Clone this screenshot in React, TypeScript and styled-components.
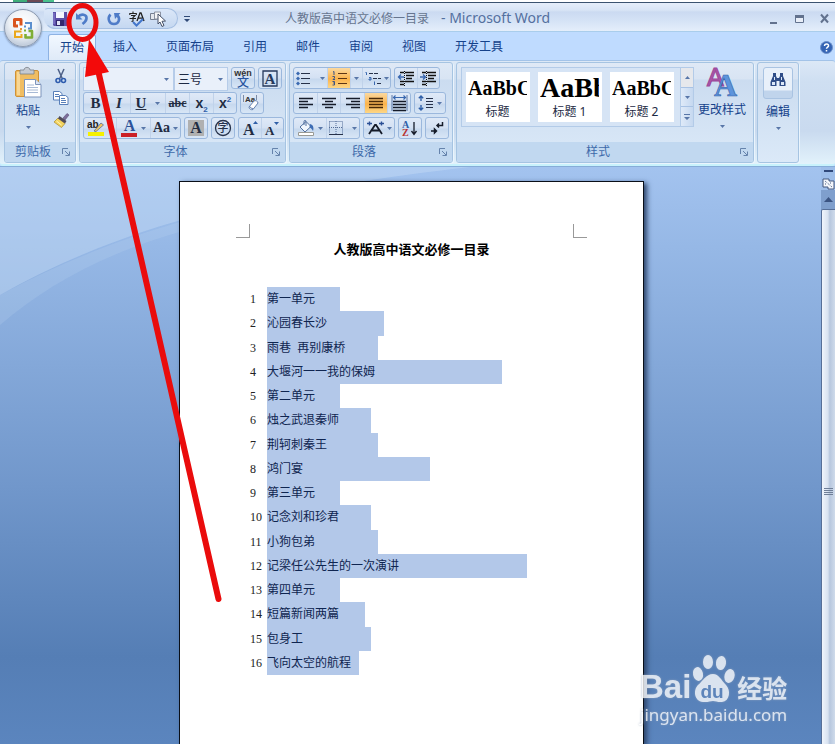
import React from "react";
import styled, { createGlobalStyle, css } from "styled-components";

const Global = createGlobalStyle`
  * { box-sizing: border-box; }
  body { margin: 0; font-family: "Noto Sans", "Noto Sans CJK SC", sans-serif; font-size: 12px; color: #15428b; }
  button, select { font: inherit; color: inherit; }
  button { border: 0; background: none; padding: 0; margin: 0; display: flex; align-items: center; justify-content: center; }
  svg { display: block; flex: none; overflow: visible; }
`;

const Window = styled.div`
  position: relative;
  display: flex;
  flex-direction: column;
  min-height: 100vh;
  overflow: hidden;
  background: #bfdbff;
`;

/* ---------- title bar ---------- */
const TopEdge = styled.div`
  height: 3px;
  padding-left: 13px;
  background: #fff;
  border-bottom: 1px solid #3c5470;
`;
const TopSliver = styled.div`
  width: 41px;
  height: 2px;
  background: linear-gradient(90deg, #3fae7a 0 14px, #6d4a55 14px 30px, #49c08c 30px);
`;
const TitleBar = styled.header`
  display: flex;
  align-items: center;
  height: 29px;
  padding: 3px 4px 0 44px;
  border-bottom: 1px solid #a9cdec;
  background: linear-gradient(#e6eefa 0, #d9e5f6 7px, #cbdaf1 9px, #d5e3f6 18px, #e4eefb 100%);
`;
const QuickBar = styled.div`
  display: flex;
  align-items: center;
  width: 134px;
  height: 21px;
  padding-left: 7px;
  border: 1px solid #a5bfe2;
  border-left-color: transparent;
  border-radius: 4px 11px 11px 12px;
  background: linear-gradient(#dbe7f8, #c5d8f1);
`;
const QuickButton = styled.button<{ $w: number }>`
  width: ${(p) => p.$w}px;
  height: 18px;
`;
const MoreButton = styled.button`
  width: 18px;
  height: 18px;
`;
const TitleText = styled.h1`
  flex: 1;
  margin: 0 0 0 89px;
  font-size: 12px;
  line-height: 20px;
  font-weight: 400;
  color: #66758f;
  white-space: nowrap;
`;
const AppName = styled.span`
  margin-left: 12px;
  font-size: 14px;
  color: #54709f;
`;
const WindowButtons = styled.div`
  display: flex;
  gap: 11px;
  & > button { width: 14px; height: 18px; }
`;

const OfficeButton = styled.button`
  position: absolute;
  left: 4px;
  top: 9px;
  width: 38px;
  height: 38px;
  border-radius: 50%;
  border: 1px solid #8d9bb0;
  background: radial-gradient(circle at 50% 35%, #ffffff 0, #eef2f7 45%, #c3cedd 75%, #f4f7fb 100%);
  box-shadow: 0 1px 2px #7d91b0;
`;

/* ---------- tabs ---------- */
const TabRow = styled.nav`
  display: flex;
  align-items: flex-end;
  gap: 5px;
  height: 28px;
  padding: 0 2px 0 48px;
  background: #bfdbff;
`;
const Tab = styled.button<{ $active?: boolean }>`
  height: 26px;
  padding: 0 12px;
  line-height: 20px;
  ${(p) =>
    p.$active &&
    css`
      padding: 0 11px;
      border: 1px solid #8db2e3;
      border-bottom: 0;
      border-radius: 3px 3px 0 0;
      background: linear-gradient(#f2f8ff, #dfeaf8);
    `}
`;
const HelpButton = styled.button`
  margin-left: auto;
  width: 14px;
  height: 26px;
`;

/* ---------- ribbon ---------- */
const Ribbon = styled.section`
  display: flex;
  gap: 3px;
  padding: 1px 4px;
  border-top: 1px solid #a3c3e8;
  border-bottom: 2px solid #c8f2fc;
  border-radius: 3px;
  background: linear-gradient(#dce8f6 0, #cfdff2 20px, #c9daef 70px, #e2f2fb 100%);
`;
const GroupBox = styled.div<{ $w: number }>`
  display: flex;
  flex-direction: column;
  width: ${(p) => p.$w}px;
  height: 101px;
  border: 1px solid #a6c4e2;
  border-radius: 3px;
  background: linear-gradient(#dfe9f6 0, #d8e4f3 16px, #cbdcf0 17px, #dbe9f8 100%);
  box-shadow: 1px 1px 0 #eaf4fd;
  overflow: hidden;
`;
const GroupBody = styled.div`
  flex: 1;
  padding: 4px 3px 0;
`;
const GroupLabel = styled.div`
  display: flex;
  align-items: center;
  height: 20px;
  padding-right: 4px;
  background: #c1d8f0;
  color: #3e6aaa;
  & > span { flex: 1; text-align: center; line-height: 18px; }
`;
const Launcher = styled.button`
  width: 10px;
  height: 12px;
`;
const Row = styled.div`
  display: flex;
  gap: 3px;
  height: 22px;
  margin-bottom: 3px;
`;
const Cluster = styled.div`
  display: flex;
  border: 1px solid #9bb8dd;
  border-radius: 3px;
  background: linear-gradient(#dfe9f7 0, #d4e1f3 10px, #c6d8ee 11px, #d8e6f6 100%);
`;
const Tool = styled.button<{ $w: number; $on?: boolean }>`
  width: ${(p) => p.$w}px;
  height: 20px;
  gap: 3px;
  color: #222c42;
  & + & { border-left: 1px solid #c0d2ea; }
  ${(p) =>
    p.$on &&
    css`
      background: linear-gradient(#fbd9a0, #fbb34c 55%, #fdd787);
    `}
`;
const Glyph = styled.span<{ $size?: number; $italic?: boolean; $line?: string; $boxed?: boolean; $sans?: boolean }>`
  font-family: ${(p) => (p.$sans ? '"Liberation Sans"' : '"Liberation Serif"')}, "Noto Sans CJK SC", serif;
  font-weight: 700;
  font-size: ${(p) => p.$size ?? 15}px;
  line-height: 16px;
  font-style: ${(p) => (p.$italic ? "italic" : "normal")};
  text-decoration: ${(p) => p.$line ?? "none"};
  & sub, & sup { font-size: 8px; line-height: 0; color: #2f5fa8; }
  ${(p) => p.$boxed && css`padding: 0 2px; background: #b0b0b0;`}
`;
const Field = styled.div<{ $w: number }>`
  display: flex;
  align-items: center;
  width: ${(p) => p.$w}px;
  height: 24px;
  padding-right: 4px;
  border: 1px solid #b6cce9;
  background: #e9f0fa;
  & + & { margin-left: -3px; }
  & select {
    flex: 1;
    min-width: 0;
    appearance: none;
    border: 0;
    padding: 0 3px;
    background: transparent;
    font-size: 12px;
    color: #1d2a44;
  }
`;

const ClipBody = styled.div`
  display: flex;
  justify-content: space-between;
  padding: 0 2px 0 6px;
`;
const ClipSide = styled.div`
  display: flex;
  flex-direction: column;
  gap: 4px;
  & > button { width: 18px; height: 18px; }
`;
const BigButton = styled.button<{ $w: number }>`
  flex-direction: column;
  justify-content: flex-start;
  width: ${(p) => p.$w}px;
  height: 66px;
  & > span { line-height: 18px; margin: 4px 0 6px; white-space: nowrap; }
`;
const FindPlate = styled.i`
  display: flex;
  justify-content: center;
  width: 30px;
  height: 32px;
  padding-top: 4px;
  border: 1px solid #a9c3e2;
  border-radius: 3px;
  background: linear-gradient(#e8f0fa 0 22px, #c0d4ec 23px);
`;

const StylesBody = styled.div`
  display: flex;
  justify-content: space-between;
  padding-left: 1px;
`;
const Gallery = styled.div`
  display: flex;
  height: 60px;
  border: 1px solid #b3cbe8;
  background: #d6e4f5;
`;
const Cards = styled.div`
  display: flex;
  gap: 8px;
  padding: 4px 6px 4px 4px;
`;
const Card = styled.button`
  flex-direction: column;
  justify-content: space-between;
  width: 64px;
  height: 50px;
  padding: 2px 3px 1px 2px;
  overflow: hidden;
  background: #fff;
  color: #1d2a44;
  & > span { line-height: 18px; }
`;
const Sample = styled.b<{ $size: number }>`
  width: 100%;
  overflow: hidden;
  text-align: left;
  font-family: "Liberation Serif", serif;
  font-size: ${(p) => p.$size}px;
  line-height: 28px;
  color: #000;
`;
const GalleryScroll = styled.div`
  display: flex;
  flex-direction: column;
  width: 13px;
  border-left: 1px solid #b3cbe8;
  & > button { flex: 1; background: linear-gradient(90deg, #dfeaf8, #c5d8f0); }
  & > button + button { border-top: 1px solid #a8c2e4; }
  & > button:first-child { background: #e6e8ec; }
`;

/* ---------- document ---------- */
const Workspace = styled.main`
  position: relative;
  flex: 1;
  display: flex;
  border-top: 1px solid #86add8;
  background: linear-gradient(#a3c3ef 0, #96b8e6 80px, #7197cb 320px, #557eb5 490px, #5b85be 100%);
`;
const Swoosh = styled.svg`
  position: absolute;
  left: 0;
  top: 0;
`;
const Canvas = styled.div`
  position: relative;
  flex: 1;
  display: flex;
  justify-content: center;
  padding: 14px 0 0 2px;
`;
const Paper = styled.article`
  flex: 0 1 465px;
  padding: 42px 56px 60px;
  border: 1px solid #0a0f18;
  border-bottom: 0;
  background: #fff;
  box-shadow: 3px 2px 5px #2d456b;
`;
const CropRow = styled.div`
  display: flex;
  justify-content: space-between;
  height: 14px;
`;
const Crop = styled.i<{ $side: "left" | "right" }>`
  width: 14px;
  border-bottom: 1px solid #999;
  ${(p) => (p.$side === "left" ? "border-right" : "border-left")}: 1px solid #999;
`;
const DocTitle = styled.h2`
  margin: 1px 0 0;
  text-align: center;
  font-size: 13px;
  line-height: 20px;
  color: #000;
`;
const Lines = styled.ol`
  display: grid;
  grid-auto-rows: 1fr;
  min-height: 388px;
  margin: 28px 0 0;
  padding: 0 0 0 14px;
  list-style: none;
`;
const Line = styled.li`
  display: flex;
  align-items: stretch;
`;
const Num = styled.span`
  width: 17px;
  font-family: "Liberation Serif", serif;
  line-height: 24px;
  color: #222;
`;
const Marked = styled.span<{ $w: number }>`
  width: ${(p) => p.$w}px;
  background: #b3c8e9;
  line-height: 24px;
  white-space: pre;
  color: #0f2550;
`;

const ScrollColumn = styled.aside`
  position: relative;
  display: flex;
  flex-direction: column;
  width: 14px;
  padding-top: 3px;
  background: #9dbde9;
`;
const SplitBox = styled.button`
  width: 9px;
  height: 2px;
  margin: 0 0 5px 3px;
  background: #30487a;
`;
const RulerButton = styled.button`
  width: 14px;
  height: 13px;
`;
const ScrollUp = styled.button`
  width: 14px;
  height: 19px;
  background: #7f9fcd;
`;
const Thumb = styled.div`
  flex: 1;
  display: flex;
  align-items: center;
  justify-content: center;
  padding-top: 30px;
  border: 1px solid #566f98;
  border-bottom: 0;
  border-right: 0;
  border-radius: 2px 0 0 0;
  background: linear-gradient(90deg, #f0f5fc, #d8e2f0 45%, #b7c7de 60%, #cfdbeb);
`;

/* ---------- overlays ---------- */
const Annotation = styled.svg`
  position: absolute;
  left: 0;
  top: 0;
  pointer-events: none;
`;
const Watermark = styled.div`
  position: absolute;
  right: 45px;
  bottom: 17px;
  width: 150px;
  color: #fff;
  opacity: 0.78;
  filter: drop-shadow(0 0 1px #8fa2bd);
  font-family: "Noto Sans", sans-serif;
  font-size: 17px;
  line-height: 24px;
  white-space: nowrap;
`;
const Brand = styled.div`
  display: flex;
  align-items: flex-end;
  height: 49px;
  font-family: "Liberation Sans", sans-serif;
  font-weight: 700;
  font-size: 33px;
  line-height: 32px;
`;
const BrandCn = styled.span`
  margin-left: 2px;
  font-family: "Noto Sans CJK SC", sans-serif;
  font-size: 25px;
`;

/* ---------- icons ---------- */
const Caret = ({ up }: { up?: boolean }) => (
  <svg width="5" height="3" viewBox="0 0 5 3">
    <path d={up ? "M0 3h5L2.500 0z" : "M0 0h5L2.500 3z"} fill="#5876a8" />
  </svg>
);
const LauncherIcon = () => (
  <svg width="8" height="8" viewBox="0 0 8 8" fill="none" stroke="#6583ac">
    <path d="M.5 6V.5H6M3 3l4 4M7.500 3.500v4h-4" />
  </svg>
);
const SaveIcon = () => (
  <svg width="14" height="14" viewBox="0 0 14 14">
    <path d="M0 0h14v14H1L0 13z" fill="#5b4fa8" />
    <path d="M3 0h8v6H3z" fill="#f4f6ff" />
    <path d="M3 8h8v6H3z" fill="#32286e" />
    <path d="M4 9h3v4H4z" fill="#dfe3f5" />
    <path d="M1 1v11" stroke="#8f88d4" />
  </svg>
);
const UndoIcon = () => (
  <svg width="16" height="15" viewBox="0 0 16 15">
    <path d="M4 6C7 2 13 3.500 12.500 7.500 12.200 10 10.500 11.500 8.500 13" fill="none" stroke="#4f7cc8" strokeWidth="2.600" />
    <path d="M2 2v6.500h6.500z" fill="#4f7cc8" />
  </svg>
);
const RedoIcon = () => (
  <svg width="14" height="14" viewBox="0 0 14 14">
    <path d="M3.500 2.500C0 6 2 12 7 12c5 0 6.500-5.500 3.500-8.500" fill="none" stroke="#4f7cc8" strokeWidth="2.600" />
    <path d="M7 1h6.500L8 7z" fill="#4f7cc8" />
  </svg>
);
const SpellIcon = () => (
  <svg width="17" height="16" viewBox="0 0 17 16" fill="none">
    <path d="M4 .5v1.500M.8 4V2.500h6.500V4M2 4.500h4L4 6.500V10l-1.500.5M.5 7.500H7" stroke="#222" strokeWidth="1.100" />
    <path d="M8 10l3-8h1l3 8M9.200 7.200h4.800" stroke="#222" strokeWidth="1.300" />
    <path d="M4 11l3.500 3.500L14 8" stroke="#4477cc" strokeWidth="2" />
  </svg>
);
const SelectIcon = () => (
  <svg width="17" height="16" viewBox="0 0 17 16">
    <path d="M.5 2.500h6v6h-6z" fill="#e5e8ee" stroke="#767f90" />
    <path d="M4.500 1h6v7h-6z" fill="#f4f4f6" stroke="#8c93a2" />
    <path d="M8 3l7.500 7-3.500.3 2 4.200-2 1-2-4.500L8 13z" fill="#fff" stroke="#444f66" />
  </svg>
);
const OfficeLogo = () => (
  <svg width="22" height="22" viewBox="0 0 22 22" fill="none">
    <path d="M9 8.500V2.500H2.500V9H6" stroke="#d9541e" strokeWidth="3" strokeLinejoin="round" />
    <path d="M13 6h6v5.500h-3" stroke="#5b8fce" strokeWidth="2" />
    <path d="M9.500 14.500H3V20h6.500v-3" stroke="#eaa81c" strokeWidth="2" />
    <path d="M13.500 17v3.500H20V14h-3.500" stroke="#7fae35" strokeWidth="2.600" strokeLinejoin="round" />
    <path d="M12 8.500h2v2h-2z" fill="#5b8fce" />
    <path d="M8 11h2v2H8z" fill="#e9963a" />
    <path d="M12 12.500h2v2h-2z" fill="#7fae35" />
  </svg>
);
const HelpIcon = () => (
  <svg width="13" height="13" viewBox="0 0 13 13">
    <circle cx="6.500" cy="6.500" r="6" fill="#3564b4" stroke="#6d8fc8" />
    <path d="M4.500 5c0-3 4.500-2.500 4 0-.2 1-2 1.400-2 2.800M6.500 9v1.500" fill="none" stroke="#fff" strokeWidth="1.500" />
  </svg>
);
const PasteIcon = () => (
  <svg width="27" height="31" viewBox="0 0 27 31">
    <rect x=".5" y="3.500" width="23" height="26" rx="1.500" fill="#f0bd62" stroke="#cf9136" />
    <path d="M2 5h3v23H2z" fill="#f8d693" />
    <path d="M5 3h4c0-3.500 6-3.500 6 0h4v4H5z" fill="#c5cad2" stroke="#7a8088" strokeWidth=".8" />
    <path d="M9.500 12.500h11l5.500 5V30h-16.500z" fill="#fff" stroke="#7d94bb" />
    <path d="M20.500 12.500v5H26" fill="#dbe5f3" stroke="#7d94bb" />
    <path d="M12 18h7M12 20.500h11M12 23h11M12 25.500h11" stroke="#a8bad5" />
  </svg>
);
const CutIcon = () => (
  <svg width="12" height="15" viewBox="0 0 12 15" fill="none">
    <path d="M3 0l4.500 10M9 0L4.500 10" stroke="#4d6087" strokeWidth="1.500" />
    <circle cx="3" cy="11.500" r="2" stroke="#2e5cae" strokeWidth="1.600" />
    <circle cx="8.500" cy="11.500" r="2" stroke="#2e5cae" strokeWidth="1.600" />
  </svg>
);
const CopyIcon = () => (
  <svg width="16" height="14" viewBox="0 0 16 14" stroke="#587fb9">
    <path d="M.5.5h6l2.500 2V9H.5z" fill="#fff" />
    <path d="M2 3.500h4M2 5.500h4" />
    <path d="M6.500 4.500h6l2.500 2v7H6.500z" fill="#fff" />
    <path d="M8 7.500h4M8 9.500h5M8 11.500h5" />
  </svg>
);
const BrushIcon = () => (
  <svg width="17" height="15" viewBox="0 0 17 15">
    <path d="M10 5l4-4.500 2 1.500-4 5z" fill="#7c6d9b" stroke="#574c72" strokeWidth=".6" />
    <path d="M5 5l7 5.500-3.500 4L1 9z" fill="#f3d35e" stroke="#a88a2d" strokeWidth=".7" />
    <path d="M6.500 3l7 5-1.500 2.500-7-5z" fill="#504b5b" />
    <path d="M3.500 8l5 4" stroke="#fff4b8" />
  </svg>
);
const PinyinIcon = () => (
  <svg width="20" height="19" viewBox="0 0 20 19">
    <text x="10" y="7" textAnchor="middle" fontFamily="Liberation Sans" fontWeight="700" fontSize="9" fill="#333">wén</text>
    <text x="10" y="18" textAnchor="middle" fontFamily="Noto Sans CJK SC" fontSize="12" fontWeight="500" fill="#2855a0">文</text>
  </svg>
);
const FramedA = () => (
  <svg width="16" height="17" viewBox="0 0 16 17">
    <path d="M1 1h14v15H1z" fill="none" stroke="#26395c" strokeWidth="1.300" />
    <text x="8" y="13.500" textAnchor="middle" fontFamily="Liberation Serif" fontWeight="700" fontSize="15" fill="#26395c">A</text>
  </svg>
);
const EraserIcon = () => (
  <svg width="18" height="18" viewBox="0 0 18 18">
    <text x="2" y="8" fontFamily="Liberation Sans" fontWeight="700" fontSize="8" fill="#333">Aa</text>
    <path d="M.5 1v7M13.500 1v5" stroke="#7d8ba5" />
    <path d="M6 13l5-6c1-1 4 0 4 2l-5 6.500c-1.500 1-4.500-1-4-2.500z" fill="#fff" stroke="#6480b0" />
    <path d="M6.500 12c.5 2 2 2.500 4 2.500" fill="none" stroke="#6480b0" />
  </svg>
);
const HighlightIcon = () => (
  <svg width="18" height="18" viewBox="0 0 18 18">
    <path d="M1 13h16v4H1z" fill="#f5f000" />
    <text x="0" y="9" fontFamily="Liberation Sans" fontWeight="700" fontSize="10" fill="#222">ab</text>
    <path d="M7 12l7-8 2.500 2L9 12.500z" fill="#f3c760" stroke="#5b6f96" strokeWidth=".8" />
  </svg>
);
const FontColorIcon = () => (
  <svg width="17" height="18" viewBox="0 0 17 18">
    <text x="8.500" y="12" textAnchor="middle" fontFamily="Liberation Serif" fontWeight="700" fontSize="16" fill="#2d539a">A</text>
    <path d="M0 14h16v4H0z" fill="#cb2026" />
  </svg>
);
const CircledChar = () => (
  <svg width="18" height="18" viewBox="0 0 18 18">
    <circle cx="9" cy="9" r="7.500" fill="none" stroke="#26314a" strokeWidth="1.300" />
    <text x="9" y="13" textAnchor="middle" fontFamily="Noto Sans CJK SC" fontWeight="500" fontSize="11" fill="#26314a">字</text>
  </svg>
);
const SizeA = ({ grow }: { grow?: boolean }) => (
  <svg width="17" height="17" viewBox="0 0 17 17">
    <text x="1" y="15" fontFamily="Liberation Serif" fontWeight="700" fontSize={grow ? 16 : 13} fill="#222c42">A</text>
    <path d={grow ? "M11 4h5l-2.500-3z" : "M10 2h5l-2.500 3z"} fill="#2f5fa8" />
  </svg>
);
const BulletsIcon = () => (
  <svg width="15" height="14" viewBox="0 0 15 14">
    <path d="M5 2.500h9M5 7.500h9M5 12.500h9" stroke="#26314a" />
    <path d="M0 2.500l2-2 2 2-2 2zM0 7.500l2-2 2 2-2 2zM0 12.500l2-2 2 2-2 2z" fill="#3a68b0" />
  </svg>
);
const NumbersIcon = () => (
  <svg width="15" height="15" viewBox="0 0 15 15" fill="none">
    <path d="M6 2.500h9M6 7.500h9M6 12.500h9" stroke="#5d3515" />
    <path d="M1 1l1-.5V4M.5 5.500h2v1.500L1 8.500h2M.5 10.500h2v1.500H1.500 2.500v2H.5" stroke="#3c5587" />
  </svg>
);
const MultiIcon = () => (
  <svg width="16" height="15" viewBox="0 0 16 15" fill="none">
    <path d="M4 2.500h10M8 7.500h8M12 12.500h4" stroke="#26314a" strokeDasharray="4 1" />
    <path d="M.5 1.500h1V4M4 6.500h2v2.500H4V8h2M9.500 10.500v3.500" stroke="#3a68b0" />
  </svg>
);
const IndentIcon = ({ right }: { right?: boolean }) => (
  <svg width="17" height="15" viewBox="0 0 17 15" fill="none">
    <path d="M2 1.500h4M7 1.500h9M8 4.500h8M8 7.500h6M2 10.500h4M7 10.500h9M2 13.500h4" stroke="#111" strokeWidth="1.500" />
    <path d="M6.500 0v15" stroke="#111" strokeDasharray="1 1" />
    <path d={right ? "M0 6h5M3 3.500L5.500 6 3 8.500" : "M6 6H1M3 3.500L.5 6 3 8.500"} stroke="#3a68b0" strokeWidth="1.400" />
  </svg>
);
const aligns: Record<string, string> = {
  left: "M1 1.500h14M1 4.500h9M1 7.500h14M1 10.500h9",
  center: "M1 1.500h14M4 4.500h8M1 7.500h14M4 10.500h8",
  right: "M1 1.500h14M6 4.500h9M1 7.500h14M6 10.500h9",
  full: "M1 1.500h14M1 4.500h14M1 7.500h14M1 10.500h14",
};
const AlignIcon = ({ kind }: { kind: string }) => (
  <svg width="16" height="12" viewBox="0 0 16 12">
    <path d={aligns[kind]} stroke={kind === "full" ? "#4a2a08" : "#151b29"} strokeWidth="1.400" />
  </svg>
);
const DistributeIcon = () => (
  <svg width="17" height="17" viewBox="0 0 17 17" fill="none">
    <path d="M1 0v16M16 0v16" stroke="#5a76a5" />
    <path d="M2 2.500h13M4.500.5l-2 2 2 2M12.500.5l2 2-2 2" stroke="#3a68b0" strokeWidth="1.200" />
    <path d="M2 6.500h13M2 9.500h13M2 12.500h13M2 15.500h13" stroke="#151b29" strokeWidth="1.400" />
  </svg>
);
const SpacingIcon = () => (
  <svg width="16" height="16" viewBox="0 0 16 16" fill="none">
    <path d="M3 1v5M3 10v5M.8 3.200L3 1l2.200 2.200M.8 12.800L3 15l2.200-2.200" stroke="#2f5fa8" strokeWidth="1.400" />
    <path d="M8 3.500h7M8 6.500h7M8 9.500h7M8 12.500h7" stroke="#26314a" />
  </svg>
);
const BucketIcon = () => (
  <svg width="17" height="16" viewBox="0 0 17 16">
    <path d="M2 7l6-5.500 5 5-6 5.500z" fill="#f1f6fd" stroke="#516f9e" />
    <path d="M6 5V1.500C6 0 8 0 8 1.500V6" fill="none" stroke="#516f9e" />
    <path d="M12 4c3.500 1 4 4 3 7-1-2-2-3-3.500-3.500z" fill="#3d6cb4" />
    <path d="M.5 12.500h15v3H.5z" fill="#fff" stroke="#9a9a94" />
  </svg>
);
const BorderIcon = () => (
  <svg width="14" height="14" viewBox="0 0 14 14" fill="none">
    <path d="M.5.5h13v12M.5.5v12M7 0v13M0 6.500h14" stroke="#536d98" strokeDasharray="1 1" />
    <path d="M0 13.500h14" stroke="#26314a" />
  </svg>
);
const WideAIcon = () => (
  <svg width="17" height="14" viewBox="0 0 17 14" fill="none">
    <path d="M2 13L8 4h1l6 9M5 9.500h7" stroke="#151b29" strokeWidth="1.800" />
    <path d="M0 2.500h5M2.500.5v4M12 2.500h5M14.500.5v4" stroke="#2b4f95" strokeWidth="1.400" />
  </svg>
);
const SortIcon = () => (
  <svg width="17" height="17" viewBox="0 0 17 17">
    <text x="0" y="8" fontFamily="Liberation Serif" fontWeight="700" fontSize="10" fill="#2f5fa8">A</text>
    <text x="0" y="16" fontFamily="Liberation Serif" fontWeight="700" fontSize="10" fill="#b83232">Z</text>
    <path d="M12 2v12M9.500 11l2.500 3.500L14.500 11" fill="none" stroke="#151b29" strokeWidth="1.300" />
  </svg>
);
const MarksIcon = () => (
  <svg width="14" height="14" viewBox="0 0 14 14" fill="none" stroke="#151b29" strokeWidth="1.500">
    <path d="M12.500 1v3.500H7M9 2.500l-2 2 2 2M1 10h5.500M4.500 8v4l2-2z" />
  </svg>
);
const ChangeStylesIcon = () => (
  <svg width="30" height="30" viewBox="0 0 30 30">
    <text x="0" y="19" fontFamily="Liberation Sans" fontWeight="400" fontSize="25" fill="#b056a8" stroke="#9c4a9c" strokeWidth="1.200">A</text>
    <text x="7" y="29" fontFamily="Liberation Serif" fontWeight="700" fontSize="32" fill="#5c94dc" stroke="#355fa8" strokeWidth=".6">A</text>
  </svg>
);
const FindIcon = () => (
  <svg width="16" height="15" viewBox="0 0 16 15">
    <path d="M3 1h3v3l1 2h2l1-2V1h3v3l2.500 6v4H9.500V9h-3v5H.5v-4L3 4z" fill="#2f4d88" />
    <path d="M2 10h3v3H2zM11 10h3v3h-3zM4 5h1v3H4zM11 5h1v3h-1z" fill="#dce8f8" />
  </svg>
);

/* ---------- composition ---------- */
const Group = ({ label, width, launcher, children }: { label?: string; width: number; launcher?: boolean; children: React.ReactNode }) => (
  <GroupBox $w={width}>
    <GroupBody>{children}</GroupBody>
    {label && (
      <GroupLabel>
        <span>{label}</span>
        {launcher && <Launcher aria-label={`${label}选项`}><LauncherIcon /></Launcher>}
      </GroupLabel>
    )}
  </GroupBox>
);

const tabs = ["开始", "插入", "页面布局", "引用", "邮件", "审阅", "视图", "开发工具"];

const lines: [string, number][] = [
  ["第一单元", 73],
  ["沁园春长沙", 117],
  ["雨巷  再别康桥", 111],
  ["大堰河一一我的保姆", 235],
  ["第二单元", 73],
  ["烛之武退秦师", 104],
  ["荆轲刺秦王", 111],
  ["鸿门宴", 163],
  ["第三单元", 73],
  ["记念刘和珍君", 104],
  ["小狗包弟", 111],
  ["记梁任公先生的一次演讲", 260],
  ["第四单元", 73],
  ["短篇新闻两篇", 98],
  ["包身工", 104],
  ["飞向太空的航程", 92],
];

export default function App() {
  return (
    <Window>
      <Global />
      <TopEdge><TopSliver /></TopEdge>
      <TitleBar>
        <QuickBar>
          <QuickButton $w={16} aria-label="保存"><SaveIcon /></QuickButton>
          <QuickButton $w={28} aria-label="撤消"><UndoIcon /></QuickButton>
          <QuickButton $w={36} aria-label="重复"><RedoIcon /></QuickButton>
          <QuickButton $w={10} aria-label="拼写"><SpellIcon /></QuickButton>
          <QuickButton $w={32} aria-label="选择"><SelectIcon /></QuickButton>
        </QuickBar>
        <MoreButton aria-label="自定义快速访问工具栏">
          <svg width="6" height="6" viewBox="0 0 6 6"><path d="M0 0h6v1H0zM0 3h6L3 6z" fill="#2f4976" /></svg>
        </MoreButton>
        <TitleText>人教版高中语文必修一目录<AppName>- Microsoft Word</AppName></TitleText>
        <WindowButtons>
          <button aria-label="最小化"><svg width="8" height="10" viewBox="0 0 8 10"><path d="M0 8h7v2H0z" fill="#62728e" /></svg></button>
          <button aria-label="最大化"><svg width="9" height="8" viewBox="0 0 9 8"><path d="M.5 1h8v6.500h-8z" fill="#e8eef8" stroke="#62728e" /><path d="M0 0h9v3H0z" fill="#62728e" /></svg></button>
          <button aria-label="关闭"><svg width="9" height="9" viewBox="0 0 9 9"><path d="M1 0.500l7 8M8 .5l-7 8" stroke="#62728e" strokeWidth="2" /></svg></button>
        </WindowButtons>
      </TitleBar>
      <TabRow>
        {tabs.map((t, i) => <Tab key={t} $active={i === 0}>{t}</Tab>)}
        <HelpButton aria-label="帮助"><HelpIcon /></HelpButton>
      </TabRow>
      <OfficeButton aria-label="Office 按钮"><OfficeLogo /></OfficeButton>

      <Ribbon>
        <Group label="剪贴板" width={72} launcher>
          <ClipBody>
            <BigButton $w={28}><PasteIcon /><span>粘贴</span><Caret /></BigButton>
            <ClipSide>
              <button aria-label="剪切"><CutIcon /></button>
              <button aria-label="复制"><CopyIcon /></button>
              <button aria-label="格式刷"><BrushIcon /></button>
            </ClipSide>
          </ClipBody>
        </Group>

        <Group label="字体" width={207} launcher>
          <Row>
            <Field $w={91}><select aria-label="字体"><option></option></select><Caret /></Field>
            <Field $w={54}><select aria-label="字号"><option>三号</option></select><Caret /></Field>
            <Cluster><Tool $w={22} aria-label="拼音指南"><PinyinIcon /></Tool></Cluster>
            <Cluster><Tool $w={22} aria-label="字符边框"><FramedA /></Tool></Cluster>
          </Row>
          <Row>
            <Cluster>
              <Tool $w={23}><Glyph>B</Glyph></Tool>
              <Tool $w={23}><Glyph $italic>I</Glyph></Tool>
              <Tool $w={35}><Glyph $line="underline">U</Glyph>&nbsp;<Caret /></Tool>
              <Tool $w={24}><Glyph $size={12} $line="line-through">abc</Glyph></Tool>
              <Tool $w={24}><Glyph $sans $size={14}>x<sub>2</sub></Glyph></Tool>
              <Tool $w={23}><Glyph $sans $size={14}>x<sup>2</sup></Glyph></Tool>
            </Cluster>
            <Cluster><Tool $w={22} aria-label="清除格式"><EraserIcon /></Tool></Cluster>
          </Row>
          <Row>
            <Cluster>
              <Tool $w={32} aria-label="突出显示"><HighlightIcon /><Caret /></Tool>
              <Tool $w={34} aria-label="字体颜色"><FontColorIcon /><Caret /></Tool>
              <Tool $w={30}><Glyph $size={14}>Aa</Glyph><Caret /></Tool>
            </Cluster>
            <Cluster><Tool $w={22}><Glyph $boxed $size={16}>A</Glyph></Tool></Cluster>
            <Cluster><Tool $w={22} aria-label="带圈字符"><CircledChar /></Tool></Cluster>
            <Cluster>
              <Tool $w={22} aria-label="增大字体"><SizeA grow /></Tool>
              <Tool $w={22} aria-label="缩小字体"><SizeA /></Tool>
            </Cluster>
          </Row>
        </Group>

        <Group label="段落" width={164} launcher>
          <Row>
            <Cluster>
              <Tool $w={33} aria-label="项目符号"><BulletsIcon />&nbsp;<Caret /></Tool>
              <Tool $w={23} $on aria-label="编号"><NumbersIcon /></Tool>
              <Tool $w={12} aria-label="编号选项"><Caret /></Tool>
              <Tool $w={28} aria-label="多级列表"><MultiIcon /><Caret /></Tool>
            </Cluster>
            <Cluster>
              <Tool $w={22} aria-label="减少缩进量"><IndentIcon /></Tool>
              <Tool $w={22} aria-label="增加缩进量"><IndentIcon right /></Tool>
            </Cluster>
          </Row>
          <Row>
            <Cluster>
              <Tool $w={23} aria-label="左对齐"><AlignIcon kind="left" /></Tool>
              <Tool $w={23} aria-label="居中"><AlignIcon kind="center" /></Tool>
              <Tool $w={24} aria-label="右对齐"><AlignIcon kind="right" /></Tool>
              <Tool $w={23} $on aria-label="两端对齐"><AlignIcon kind="full" /></Tool>
              <Tool $w={23} aria-label="分散对齐"><DistributeIcon /></Tool>
            </Cluster>
            <Cluster><Tool $w={30} aria-label="行距"><SpacingIcon /><Caret /></Tool></Cluster>
          </Row>
          <Row>
            <Cluster>
              <Tool $w={32} aria-label="底纹"><BucketIcon /><Caret /></Tool>
              <Tool $w={33} aria-label="边框"><BorderIcon />&nbsp;<Caret /></Tool>
            </Cluster>
            <Cluster><Tool $w={30} aria-label="中文版式"><WideAIcon /><Caret /></Tool></Cluster>
            <Cluster><Tool $w={22} aria-label="排序"><SortIcon /></Tool></Cluster>
            <Cluster><Tool $w={22} aria-label="显示编辑标记"><MarksIcon /></Tool></Cluster>
          </Row>
        </Group>

        <Group label="样式" width={298} launcher>
          <StylesBody>
            <Gallery>
              <Cards>
                <Card><Sample $size={20}>AaBbC</Sample><span>标题</span></Card>
                <Card><Sample $size={28}>AaBbC</Sample><span>标题 1</span></Card>
                <Card><Sample $size={20}>AaBbC</Sample><span>标题 2</span></Card>
              </Cards>
              <GalleryScroll>
                <button aria-label="上一行"><Caret up /></button>
                <button aria-label="下一行"><Caret /></button>
                <button aria-label="其他"><svg width="6" height="6" viewBox="0 0 6 6"><path d="M0 0h6v1H0zM0 3h6L3 6z" fill="#5876a8" /></svg></button>
              </GalleryScroll>
            </Gallery>
            <BigButton $w={56}><ChangeStylesIcon /><span>更改样式</span><Caret /></BigButton>
          </StylesBody>
        </Group>

        <Group width={42}>
          <BigButton $w={34}><FindPlate><FindIcon /></FindPlate><span>编辑</span><Caret /></BigButton>
        </Group>
      </Ribbon>

      <Workspace>
        <Swoosh width="480" height="170" viewBox="0 0 480 170" aria-hidden="true">
          <path d="M0 128C110 66 240 26 470 0H0z" fill="#c8def5" opacity=".42" />
          <path d="M0 158C50 115 110 84 190 62L190 52C120 72 60 96 0 128z" fill="#c8def5" opacity=".18" />
        </Swoosh>
        <Canvas>
          <Paper>
            <CropRow><Crop $side="left" /><Crop $side="right" /></CropRow>
            <DocTitle>人教版高中语文必修一目录</DocTitle>
            <Lines>
              {lines.map(([text, w], i) => (
                <Line key={i}>
                  <Num>{i + 1}</Num>
                  <Marked $w={w}>{text}</Marked>
                </Line>
              ))}
            </Lines>
          </Paper>
        </Canvas>
        <ScrollColumn>
          <SplitBox aria-label="拆分" />
          <RulerButton aria-label="标尺">
            <svg width="13" height="12" viewBox="0 0 13 12"><path d="M1 1h6v2h5v8H6V9H1z" fill="#f3f6fb" stroke="#44587f" /><path d="M3 3l7 6M3 6h2M8 5h2" stroke="#44587f" strokeDasharray="1 1" /></svg>
          </RulerButton>
          <ScrollUp aria-label="向上滚动">
            <svg width="9" height="5" viewBox="0 0 9 5"><path d="M0 5h9L4.500 0z" fill="#3b5482" /></svg>
          </ScrollUp>
          <Thumb>
            <svg width="9" height="8" viewBox="0 0 9 8"><path d="M0 .5h9M0 2.500h9M0 4.500h9M0 6.500h9" stroke="#6f7f98" /></svg>
          </Thumb>
        </ScrollColumn>
        <Watermark>
          <Brand>
            Bai
            <svg width="44" height="48" viewBox="0 0 44 48">
              <g fill="#fff">
                <ellipse cx="7" cy="19" rx="5" ry="7" transform="rotate(-12 7 19)" />
                <ellipse cx="17" cy="7" rx="5" ry="7" />
                <ellipse cx="30" cy="8" rx="5" ry="7" transform="rotate(8 30 8)" />
                <ellipse cx="38.500" cy="21" rx="5" ry="7" transform="rotate(16 38.500 21)" />
                <path d="M22 19c6 0 8 6 13 11 5 5 4 16-4 17-4 .5-6-1-9-1s-5 1.500-10 1C3 46 2 35 7 30c5-4 8-11 15-11z" />
              </g>
              <text x="21" y="43" textAnchor="middle" fontFamily="Liberation Sans" fontWeight="700" fontSize="19" fill="#5f86bb">du</text>
            </svg>
            <BrandCn>经验</BrandCn>
          </Brand>
          jingyan.baidu.com
        </Watermark>
      </Workspace>

      <Annotation width="240" height="620" viewBox="0 0 240 620" aria-hidden="true">
        <ellipse cx="82.500" cy="22.500" rx="13.500" ry="17" fill="none" stroke="#ea0c0c" strokeWidth="5" />
        <path d="M98 70L218.500 599" stroke="#ea0c0c" strokeWidth="6" strokeLinecap="round" />
        <path d="M89 39L85 77L109 72z" fill="#f30a0a" />
      </Annotation>
    </Window>
  );
}
